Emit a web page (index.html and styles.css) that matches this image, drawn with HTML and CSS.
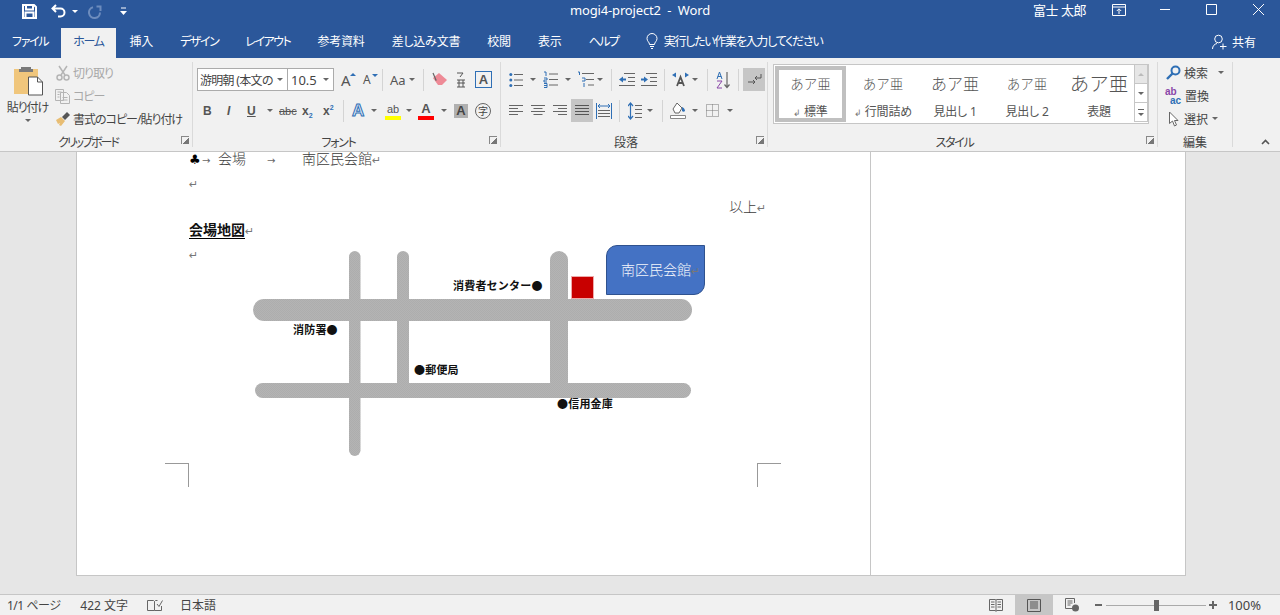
FILE: index.html
```html
<!DOCTYPE html>
<html lang="ja">
<head>
  <meta charset="UTF-8">
  <title>mogi4-project2 - Word</title>
  <link rel="stylesheet" href="styles.css">
</head>
<body>

  <!-- タイトルバー -->
  <header class="titlebar">
    <div class="qat">
      <svg class="ml22" width="15" height="15" viewBox="0 0 15 15"><path d="M1 1h11l2 2v11H1z M4 1.500v4h7v-4 M3.500 14V8.500h8V14" fill="none" stroke="#fff" stroke-width="2"/></svg>
      <svg class="ml14" width="16" height="14" viewBox="0 0 16 14"><path d="M5 1L1.500 4.500 5 8M2 4.500h7.500a4 4 0 0 1 0 8H7" fill="none" stroke="#fff" stroke-width="2"/></svg>
      <span class="caret caret-w ml5"></span>
      <svg class="ml10" width="15" height="15" viewBox="0 0 15 15"><path d="M5 3.200A5.500 5.500 0 1 0 12 8.500" fill="none" stroke="#6d8cbd" stroke-width="2"/><path d="M8.500 2.500H12.500V7" fill="none" stroke="#6d8cbd" stroke-width="2"/></svg>
      <svg class="ml17" width="7" height="8" viewBox="0 0 7 8"><path d="M1 1h5" stroke="#fff"/><path d="M0 4h7L3.500 8z" fill="#fff"/></svg>
    </div>
    <div class="doc-title">mogi4-project2  -  Word</div>
    <div class="win-controls">
      <span class="user">富士 太郎</span>
      <svg class="ml26" width="14" height="12" viewBox="0 0 14 12"><path d="M.5.500h13v11H.5zM.5 3h13M7 10V5M4.800 7L7 4.800 9.200 7" fill="none" stroke="#fff"/></svg>
      <svg class="ml34" width="11" height="11" viewBox="0 0 11 11"><path d="M0 5.500h10" stroke="#fff"/></svg>
      <svg class="ml35" width="11" height="11" viewBox="0 0 11 11"><path d="M.5.500h10v10H.5z" fill="none" stroke="#fff"/></svg>
      <svg class="ml35" width="13" height="13" viewBox="0 0 13 13"><path d="M1 1l11 11M12 1L1 12" stroke="#fff"/></svg>
    </div>
  </header>

  <!-- タブ -->
  <nav class="tabs">
    <span class="tab tab-file kana">ファイル</span>
    <span class="tab active kana">ホーム</span>
    <span class="tab">挿入</span>
    <span class="tab kana">デザイン</span>
    <span class="tab kana">レイアウト</span>
    <span class="tab">参考資料</span>
    <span class="tab">差し込み文書</span>
    <span class="tab">校閲</span>
    <span class="tab">表示</span>
    <span class="tab kana">ヘルプ</span>
    <svg class="bulb" width="12" height="16" viewBox="0 0 12 16"><path d="M3.500 11.500C3.500 9 1 8.500 1 5.500a5 5 0 0 1 10 0c0 3-2.500 3.500-2.500 6zM4 13.500h4M5 15.500h2" fill="none" stroke="#fff"/></svg>
    <span class="tell">実行したい作業を入力してください</span>
    <div class="share">
      <svg width="15" height="16" viewBox="0 0 15 16"><circle cx="6.500" cy="5" r="3.800" fill="none" stroke="#fff"/><path d="M.5 15c0-3 2-5 4.500-5.500M11 9.500v6M8 12.500h6.500" fill="none" stroke="#fff"/></svg>
      <span>共有</span>
    </div>
  </nav>

  <!-- リボン -->
  <section class="ribbon">

    <div class="group g-clip">
      <div class="clip-body">
        <div class="paste">
          <svg width="29" height="30" viewBox="0 0 29 30">
            <path d="M0 3h24v25H0z" fill="#f0c67c"/>
            <path d="M7 3V1h10v2h2v3H5V3z" fill="#7a7a7a"/>
            <path d="M14.500 11h9l5 5v13h-14z" fill="#fff" stroke="#555"/>
            <path d="M23.500 11v5h5" fill="none" stroke="#555"/>
          </svg>
          <span class="paste-label">貼り付け</span>
          <span class="caret"></span>
        </div>
        <div class="clip-list">
          <div class="list-row off">
            <svg width="16" height="16" viewBox="0 0 16 16"><path d="M4 1l6 9M12 1L6 10" stroke="#b4b4b4" stroke-width="1.500" fill="none"/><circle cx="4.500" cy="12.500" r="2.500" fill="none" stroke="#b4b4b4" stroke-width="1.500"/><circle cx="11.500" cy="12.500" r="2.500" fill="none" stroke="#b4b4b4" stroke-width="1.500"/></svg>
            <span>切り取り</span>
          </div>
          <div class="list-row off">
            <svg width="16" height="16" viewBox="0 0 16 16"><path d="M.5 1.500h8v11h-8zM5.500 4.500h6l3 3v8h-9zM2.500 4h4M2.500 6.500h2M2.500 9h2M7.500 9.500h5M7.500 12h5" fill="#f1f1f1" stroke="#b4b4b4"/></svg>
            <span>コピー</span>
          </div>
          <div class="list-row">
            <svg width="16" height="16" viewBox="0 0 16 16"><path d="M1 9l5-3 4 4-4 5-2-1 1-2-2 1z" fill="#e8bd73"/><path d="M7 6l5-5 3 3-5 5z" fill="#555"/></svg>
            <span>書式のコピー/貼り付け</span>
          </div>
        </div>
      </div>
      <div class="group-label kana-wide">クリップボード</div>
      <span class="launcher"></span>
    </div>

    <div class="group g-font">
      <div class="rows">
        <div class="row">
          <span class="combo combo-font"><span>游明朝 (本文の</span><span class="caret"></span></span>
          <span class="combo combo-size"><span>10.5</span><span class="caret"></span></span>
          <span class="glyph glyph-grow ml7">A<i class="up"></i></span>
          <span class="glyph glyph-shrink ml10">A<i class="down"></i></span>
          <span class="sep ml7"></span>
          <span class="glyph glyph-case ml7">Aa</span>
          <span class="caret ml3"></span>
          <span class="sep ml8"></span>
          <svg class="ml8" width="16" height="15" viewBox="0 0 16 15"><path d="M1 6l6-5 8 7-5 5-4 0z" fill="#ee8a96"/><path d="M1 1l3 7h-1" fill="none" stroke="#666" stroke-width="1.200"/></svg>
          <svg class="ml8" width="10" height="16" viewBox="0 0 10 16"><path d="M1 1h6L4 5M1 8h8M1 11h8M1 15h8M3 8v7M7 8v7" fill="none" stroke="#555"/></svg>
          <span class="box-a ml9">A</span>
        </div>
        <div class="row">
          <span class="fmt fmt-b ml6">B</span>
          <span class="fmt fmt-i ml15">I</span>
          <span class="fmt fmt-u ml15">U</span>
          <span class="caret ml10"></span>
          <span class="fmt fmt-s ml6">abc</span>
          <span class="fmt fmt-x ml7">x<sub>2</sub></span>
          <span class="fmt fmt-x ml8">x<sup>2</sup></span>
          <span class="sep ml7"></span>
          <span class="text-effect ml8">A</span>
          <span class="caret ml4"></span>
          <span class="marker ml8"><span class="marker-txt">ab</span><i class="bar bar-y"></i></span>
          <span class="caret ml5"></span>
          <span class="marker ml6"><span class="marker-a">A</span><i class="bar bar-r"></i></span>
          <span class="caret ml7"></span>
          <span class="shade-a ml7">A</span>
          <span class="ji ml7">字</span>
        </div>
      </div>
      <div class="group-label kana">フォント</div>
      <span class="launcher"></span>
    </div>

    <div class="group g-para">
      <div class="rows">
        <div class="row">
          <svg class="ml8" width="14" height="16" viewBox="0 0 14 16"><path d="M5 2.500h9M5 8h9M5 13.500h9" stroke="#666"/><circle cx="1.800" cy="2.500" r="1.500" fill="#2f6fb5"/><circle cx="1.800" cy="8" r="1.500" fill="#2f6fb5"/><circle cx="1.800" cy="13.500" r="1.500" fill="#2f6fb5"/></svg>
          <span class="caret ml7"></span>
          <svg class="ml7" width="15" height="17" viewBox="0 0 15 17"><path d="M6 3h9M6 8.500h9M6 14h9" stroke="#666"/><path d="M1 1h2v4M1 7h3v2H1v2h3M1 12.500h3v4H1M1 14.500h3" fill="none" stroke="#2f6fb5"/></svg>
          <span class="caret ml7"></span>
          <svg class="ml6" width="17" height="17" viewBox="0 0 17 17"><path d="M5 2.500h12M9 8.500h8M11 14h6" stroke="#666"/><path d="M1 1h1.500v3M5 7h3v3H5M7 12v4" fill="none" stroke="#2f6fb5"/></svg>
          <span class="caret ml3"></span>
          <span class="sep ml8"></span>
          <svg class="ml7" width="16" height="14" viewBox="0 0 16 14"><path d="M5 .5h11M9 4.500h7M9 8.500h7M0 12.500h16" stroke="#666"/><path d="M0 6.500l4-3v2h3v2H4v2z" fill="#2f6fb5"/></svg>
          <svg class="ml6" width="16" height="14" viewBox="0 0 16 14"><path d="M5 .5h11M9 4.500h7M9 8.500h7M0 12.500h16" stroke="#666"/><path d="M7 6.500l-4-3v2H0v2h3v2z" fill="#2f6fb5"/></svg>
          <span class="sep ml7"></span>
          <svg class="ml7" width="17" height="15" viewBox="0 0 17 15"><path d="M5 14L8.500 5 12 14M6 11h5" fill="none" stroke="#555" stroke-width="1.800"/><path d="M0 3l4-2.500v5zM17 3l-4-2.500v5z" fill="#2f6fb5"/></svg>
          <span class="caret ml3"></span>
          <span class="sep ml9"></span>
          <svg class="ml8" width="14" height="18" viewBox="0 0 14 18"><path d="M1 8l2.500-7L6 8M1.800 5.500h3.500" fill="none" stroke="#2f6fb5"/><path d="M1 10h5l-5 7h5" fill="none" stroke="#8a46a8"/><path d="M11 1v15M8.500 13.500L11 16.500l2.500-3" fill="none" stroke="#666" stroke-width="1.200"/></svg>
          <span class="sep ml8"></span>
          <span class="on-btn ml4">
            <svg width="15" height="14" viewBox="0 0 15 14"><path d="M14 1v4H8M10 3L8 5l2 2" fill="none" stroke="#555"/><path d="M1 9h7M6 7l2 2-2 2" fill="none" stroke="#555"/></svg>
          </span>
        </div>
        <div class="row">
          <svg class="ml8" width="14" height="11" viewBox="0 0 14 11"><path d="M0 .5h14M0 3.500h9M0 6.500h14M0 9.500h9" stroke="#666"/></svg>
          <svg class="ml8" width="14" height="11" viewBox="0 0 14 11"><path d="M0 .5h14M2.500 3.500h9M0 6.500h14M2.500 9.500h9" stroke="#666"/></svg>
          <svg class="ml8" width="14" height="11" viewBox="0 0 14 11"><path d="M0 .5h14M5 3.500h9M0 6.500h14M5 9.500h9" stroke="#666"/></svg>
          <span class="on-btn ml4">
            <svg width="14" height="11" viewBox="0 0 14 11"><path d="M0 .5h14M0 3.500h14M0 6.500h14M0 9.500h14" stroke="#555"/></svg>
          </span>
          <svg class="ml3" width="16" height="16" viewBox="0 0 16 16"><path d="M.5 0v16M15.500 0v16M2 3h12M2 3l2-2M2 3l2 2M14 3l-2-2M14 3l-2 2" fill="none" stroke="#2f6fb5"/><path d="M2 7.500h12M2 10.500h12M2 13.500h12" stroke="#666"/></svg>
          <span class="sep ml7"></span>
          <svg class="ml8" width="14" height="18" viewBox="0 0 14 18"><path d="M2.500 1v16M0 4l2.500-3L5 4M0 14l2.500 3L5 14" fill="none" stroke="#2f6fb5" stroke-width="1.200"/><path d="M7 3.500h7M7 7.500h7M7 11.500h7M7 15.500h7" stroke="#666"/></svg>
          <span class="caret ml5"></span>
          <span class="sep ml9"></span>
          <svg class="ml7" width="16" height="17" viewBox="0 0 16 17"><path d="M3 7l4-6 5 5-3 5H5z" fill="#fff" stroke="#666"/><path d="M12 5c2 1 3 2.500 3 4-1 1-2 1-3 0z" fill="#2f6fb5"/><path d="M.5 13.500h15v3H.5z" fill="#fff" stroke="#888"/></svg>
          <span class="caret ml6"></span>
          <svg class="ml8" width="13" height="13" viewBox="0 0 13 13"><path d="M.5.500h12v12H.5zM6.500.5v12M.5 6.500h12" fill="none" stroke="#777" stroke-dasharray="1 1"/></svg>
          <span class="caret ml8"></span>
        </div>
      </div>
      <div class="group-label">段落</div>
      <span class="launcher"></span>
    </div>

    <div class="group g-style">
      <div class="gallery">
        <div class="style-item selected"><span class="pv pv-s">あア亜</span><span class="style-name"><i class="enter">↲</i> 標準</span></div>
        <div class="style-item"><span class="pv pv-s">あア亜</span><span class="style-name"><i class="enter">↲</i> 行間詰め</span></div>
        <div class="style-item"><span class="pv pv-m">あア亜</span><span class="style-name">見出し 1</span></div>
        <div class="style-item"><span class="pv pv-s">あア亜</span><span class="style-name">見出し 2</span></div>
        <div class="style-item"><span class="pv pv-l">あア亜</span><span class="style-name">表題</span></div>
        <div class="gallery-scroll">
          <span class="scroll-btn off"><i class="arrow-up"></i></span>
          <span class="scroll-btn"><span class="caret"></span></span>
          <span class="scroll-btn more"><span class="caret"></span></span>
        </div>
      </div>
      <div class="group-label kana">スタイル</div>
      <span class="launcher"></span>
    </div>

    <div class="group g-edit">
      <div class="edit-list">
        <div class="list-row">
          <svg width="15" height="15" viewBox="0 0 15 15"><circle cx="9.500" cy="5.500" r="4" fill="none" stroke="#2f6fb5" stroke-width="2"/><path d="M6.500 8.500L1 14" stroke="#2f6fb5" stroke-width="2.400"/></svg>
          <span>検索</span><span class="caret ml10"></span>
        </div>
        <div class="list-row">
          <span class="replace"><b class="re-ab">ab</b><b class="re-ac">ac</b></span>
          <span>置換</span>
        </div>
        <div class="list-row">
          <svg width="15" height="16" viewBox="0 0 15 16"><path d="M3.500 1v11.500l3-2.500 2 5 2-1-2-4.500h3.500z" fill="#fff" stroke="#666"/></svg>
          <span>選択</span><span class="caret ml4"></span>
        </div>
      </div>
      <div class="group-label">編集</div>
    </div>

    <svg class="collapse" width="9" height="6" viewBox="0 0 9 6"><path d="M1 5l3.500-3.500L8 5" fill="none" stroke="#555" stroke-width="1.600"/></svg>
  </section>

  <!-- 文書 -->
  <main class="workspace">
    <div class="page">
      <div class="sheet">
        <p class="line line-first"><span class="club">♣</span><span class="tabmark tm1">→</span><span class="tm2">会場</span><span class="tabmark tm3">→</span><span class="tm4">南区民会館</span><i class="pil">↵</i></p>
        <p class="line"><i class="pil">↵</i></p>
        <p class="line line-right">以上<i class="pil">↵</i></p>
        <p class="line"><span class="map-title">会場地図</span><i class="pil">↵</i></p>
        <p class="line"><i class="pil">↵</i></p>

        <!-- 地図: 図形はページ上の自由配置 -->
        <div class="map">
          <svg class="roads" width="460" height="215" viewBox="0 0 460 215">
            <defs>
              <pattern id="halftone" width="2" height="2" patternUnits="userSpaceOnUse">
                <rect width="2" height="2" fill="#b4b4b4"/>
                <rect width="1" height="1" fill="#adadad"/>
                <rect x="1" y="1" width="1" height="1" fill="#adadad"/>
              </pattern>
            </defs>
            <g fill="url(#halftone)">
              <rect x="96" y="6" width="11.500" height="205" rx="5.750"/>
              <rect x="144" y="6" width="12" height="140" rx="6"/>
              <rect x="297" y="6" width="18" height="140" rx="9"/>
              <rect x="0" y="54" width="439" height="22" rx="11"/>
              <rect x="2" y="138" width="436" height="15" rx="7.500"/>
            </g>
          </svg>
          <div class="pin red-square"></div>
          <div class="pin hall">南区民会館<i class="pil">↵</i></div>
          <span class="pin place p-center">消費者センター●</span>
          <span class="pin place p-fire">消防署●</span>
          <span class="pin place p-post">●郵便局</span>
          <span class="pin place p-bank">●信用金庫</span>
        </div>

        <span class="crop crop-l"></span>
        <span class="crop crop-r"></span>
      </div>
    </div>
  </main>

  <!-- ステータスバー -->
  <footer class="statusbar">
    <span class="st-page">1/1 ページ</span>
    <span class="st-words">422 文字</span>
    <svg class="st-proof" width="16" height="13" viewBox="0 0 16 13"><path d="M.5 1.500h6l1 1v9h-7zM7.500 2.500l1-1h2M7.500 11.500h7V7M10 5l2 2.500 3.500-6" fill="none" stroke="#666"/></svg>
    <span class="st-lang">日本語</span>
    <div class="st-right">
      <svg width="14" height="15" viewBox="0 0 14 15"><path d="M.5 1.500h6l.5 1 .5-1h6v11h-6l-.5 1-.5-1h-6zM7 2.500v10M2 4h3.500M2 6.500h3.500M2 9h3.500M8.500 4H12M8.500 6.500H12M8.500 9H12" fill="none" stroke="#666"/></svg>
      <span class="view-on"><svg width="14" height="13" viewBox="0 0 14 13"><path d="M.5.500h13v12H.5zM3 3h8M3 5h8M3 7h8M3 9h8" fill="none" stroke="#555"/></svg></span>
      <svg width="14" height="14" viewBox="0 0 14 14"><path d="M8 10.500H.5V.5h9V5M2.500 3h5M2.500 5h5M2.500 7h3" fill="none" stroke="#666"/><circle cx="10.500" cy="10" r="3.500" fill="#666"/></svg>
      <span class="zoom-minus"></span>
      <span class="slider"><i class="thumb"></i></span>
      <span class="zoom-plus"></span>
      <span class="zoom-val">100%</span>
    </div>
  </footer>

</body>
</html>
```

FILE: styles.css
```css
* { box-sizing: border-box; }
html, body { margin: 0; height: 100%; }
body {
  width: 1280px; height: 615px; overflow: hidden; display: flex; flex-direction: column;
  font-family: "Noto Sans", "Noto Sans CJK JP", sans-serif; font-size: 12px; color: #444;
  font-feature-settings: "palt"; background: #e6e6e6;
}
i { font-style: normal; }
svg { display: block; flex: none; }

/* 余白 */
.ml3 { margin-left: 3px; } .ml4 { margin-left: 4px; } .ml5 { margin-left: 5px; }
.ml6 { margin-left: 6px; } .ml7 { margin-left: 7px; } .ml8 { margin-left: 8px; }
.ml9 { margin-left: 9px; } .ml10 { margin-left: 10px; } .ml14 { margin-left: 14px; }
.ml15 { margin-left: 15px; } .ml17 { margin-left: 17px; } .ml22 { margin-left: 22px; }
.ml26 { margin-left: 26px; } .ml34 { margin-left: 34px; } .ml35 { margin-left: 35px; }

.caret {
  display: inline-block; flex: none; width: 0; height: 0;
  border-left: 3px solid transparent; border-right: 3px solid transparent; border-top: 3px solid #666;
}
.caret-w { border-top-color: #fff; }
.kana { letter-spacing: -1.300px; }
.kana-wide { letter-spacing: -2px; }

/* タイトルバー */
.titlebar {
  height: 28px; flex: none; background: #2b579a; color: #fff;
  display: grid; grid-template-columns: 1fr auto 1fr; align-items: center;
}
.qat { display: flex; align-items: center; padding-bottom: 6px; }
.doc-title { font-size: 13px; white-space: pre; letter-spacing: -.15px; padding-bottom: 8px; }
.win-controls { display: flex; align-items: center; justify-content: flex-end; padding: 0 15px 9px 0; }
.user { font-size: 13px; letter-spacing: -.5px; }

/* タブ */
.tabs { height: 30px; flex: none; background: #2b579a; color: #fff; display: flex; align-items: stretch; }
.tab { padding: 0 13.500px; line-height: 28px; white-space: nowrap; letter-spacing: -.2px; }
.tab.kana { letter-spacing: -1.450px; }
.tab.tab-file { padding: 0; width: 61px; text-indent: 12px; letter-spacing: -1.300px; }
.tab.active { background: #f1f1f1; color: #2b579a; padding: 0; width: 55px; text-align: center; letter-spacing: -1.300px; }
.bulb { margin: 5px 0 0 13.500px; }
.tell { margin-left: 6px; line-height: 28px; letter-spacing: -1.250px; }
.share { margin-left: auto; padding: 0 24px 2px 0; display: flex; align-items: center; gap: 5px; }

/* リボン */
.ribbon {
  height: 94px; flex: none; background: #f1f1f1; border-bottom: 1px solid #c6c6c6;
  display: flex; align-items: flex-start; position: relative;
}
.group {
  height: 85px; margin-top: 4px; border-right: 1px solid #dadada;
  display: flex; flex-direction: column; position: relative; flex: none;
}
.g-clip { width: 193px; }
.g-font { width: 308px; }
.g-para { width: 267px; }
.g-style { width: 390px; }
.g-edit { width: 75px; }
.group-label { margin-top: auto; text-align: center; line-height: 16px; margin-bottom: -4px; padding-right: 16px; color: #444; }
.g-edit .group-label { padding-right: 0; }
.launcher {
  position: absolute; right: 3px; bottom: 3px; width: 8px; height: 8px;
  border-left: 1px solid #888; border-top: 1px solid #888;
  background: linear-gradient(135deg, transparent 55%, #777 55%);
}

.clip-body { display: flex; }
.paste { width: 55px; padding-top: 4px; display: flex; flex-direction: column; align-items: center; letter-spacing: -1px; }
.paste svg { margin-left: 2px; }
.paste-label { margin-top: 4px; line-height: 16px; }
.paste .caret { margin-top: 3px; }
.list-row { height: 23px; display: flex; align-items: center; gap: 3px; white-space: nowrap; }
.list-row.off { color: #a8a8a8; }
.clip-list { margin-top: -1px; letter-spacing: -1px; }
.clip-list .list-row { gap: 2px; }

.rows { padding-top: 6px; display: flex; flex-direction: column; gap: 8px; }
.row { height: 23px; display: flex; align-items: center; white-space: nowrap; }
.g-font .row { padding-left: 4px; }

.sep { width: 1px; height: 22px; background: #d4d4d4; flex: none; }
.combo {
  height: 23px; background: #fff; border: 1px solid #ababab; display: flex; align-items: center;
  justify-content: space-between; padding: 0 4px 0 2px; flex: none;
}
.combo-font { width: 91px; letter-spacing: -.7px; }
.combo-size { width: 47px; margin-left: -1px; font-size: 13px; padding-left: 3px; }

.glyph { position: relative; flex: none; font-family: "Noto Sans", sans-serif; color: #555; }
.glyph-grow { font-size: 15px; width: 12px; }
.glyph-shrink { font-size: 12px; width: 12px; }
.glyph-case { font-size: 13px; width: 16px; }
.up, .down {
  position: absolute; right: -3px; top: 3px; width: 0; height: 0;
  border-left: 3px solid transparent; border-right: 3px solid transparent;
}
.up { border-bottom: 3px solid #2f6fb5; }
.down { border-top: 3px solid #2f6fb5; }
.box-a {
  width: 17px; height: 17px; border: 1px solid #2f6fb5; color: #555; text-align: center;
  font: bold 13px/15px "Liberation Sans", sans-serif; flex: none;
}

.fmt { font-family: "Liberation Sans", sans-serif; color: #555; font-size: 12px; flex: none; }
.fmt-b { font-weight: bold; width: 9px; }
.fmt-i { font-style: italic; font-weight: bold; width: 5px; }
.fmt-u { font-weight: bold; text-decoration: underline; width: 10px; }
.fmt-s { font-size: 11px; text-decoration: line-through; width: 16px; }
.fmt-x { font-weight: bold; width: 13px; font-size: 12px; }
.fmt-x sub, .fmt-x sup { font-size: 7px; color: #2f6fb5; line-height: 0; }

.text-effect {
  width: 15px; font: bold 17px/18px "Liberation Sans", sans-serif; color: #dfeaf7; flex: none;
  -webkit-text-stroke: 1px #2f6fb5;
}
.marker { width: 16px; height: 18px; display: flex; flex-direction: column; align-items: center; flex: none; }
.marker-txt { font: 11px/14px "Liberation Sans", sans-serif; color: #555; }
.marker-a { font: bold 13px/14px "Liberation Sans", sans-serif; color: #555; }
.bar { width: 16px; height: 4px; }
.bar-y { background: #ffff00; }
.bar-r { background: #ff0000; }
.shade-a {
  width: 14px; height: 14px; background: #b0b0b0; color: #444; text-align: center; flex: none;
  font: bold 13px/14px "Liberation Sans", sans-serif;
}
.ji {
  width: 16px; height: 16px; border: 1px solid #666; border-radius: 50%; font-size: 10px;
  line-height: 14px; text-align: center; flex: none;
}

.on-btn { width: 22px; height: 23px; background: #c6c6c6; display: flex; align-items: center; justify-content: center; flex: none; }

/* スタイル */
.gallery {
  width: 376px; height: 60px; margin: 2px 0 0 5px; background: #fff; border: 1px solid #c6c6c6;
  display: flex; position: relative;
}
.style-item {
  width: 72px; flex: none; display: flex; flex-direction: column; align-items: center;
  padding-top: 6px; color: #555;
}
.style-item.selected { width: 71px; margin: 1px 1px 0 1px; height: 56px; border: 4px solid #c0c0c0; padding-top: 1px; }
.pv { height: 26px; line-height: 26px; font-weight: 300; white-space: nowrap; font-feature-settings: normal; }
.pv-s { font-size: 13.500px; }
.pv-m { font-size: 16px; }
.pv-l { font-size: 19.500px; }
.style-name { line-height: 18px; margin-top: 6px; white-space: nowrap; letter-spacing: -.2px; }
.selected .style-name { margin-top: 6px; }
.enter { font-size: 9px; color: #777; }
.gallery-scroll { position: absolute; right: 0; top: -1px; width: 14px; height: 60px; display: flex; flex-direction: column; }
.scroll-btn {
  height: 20px; border: 1px solid #c6c6c6; background: #fff; display: flex; align-items: center;
  justify-content: center; margin-bottom: -1px; position: relative;
}
.scroll-btn.off { background: #e6e6e6; }
.arrow-up { width: 0; height: 0; border-left: 3px solid transparent; border-right: 3px solid transparent; border-bottom: 3px solid #bbb; }
.more::before { content: ""; position: absolute; top: 6px; left: 3px; width: 6px; height: 1px; background: #666; }
.more .caret { margin-top: 4px; }

/* 編集 */
.edit-list { padding-left: 8px; margin-top: -1px; }
.edit-list .list-row { gap: 3px; }
.edit-list .ml10 { margin-left: 7px; }
.edit-list .ml4 { margin-left: 1px; }
.replace { width: 16px; margin-left: -1px; margin-right: 1px; height: 18px; position: relative; font: bold 10px/9px "Liberation Sans", sans-serif; flex: none; display: flex; flex-direction: column; align-items: flex-end; }
.re-ab { color: #8a46a8; align-self: flex-start; }
.re-ac { color: #2f6fb5; }
.collapse { position: absolute; right: 10px; bottom: 6px; }

/* 文書エリア */
.workspace { flex: 1; min-height: 0; padding-left: 76px; background: #e6e6e6; }
.page {
  width: 1110px; height: 424px; background: #fff; border: 1px solid #c6c6c6; border-top: none;
}
.sheet { display: flow-root; width: 794px; height: 423px; border-right: 1px solid #c6c6c6; position: relative; padding: 0 105px 0 112px; }
.line {
  margin: 0; height: 23.750px; line-height: 24px; font-size: 14px; color: #3c3c3c; font-weight: 300;
  font-feature-settings: normal; white-space: nowrap;
}
.line-first { margin-top: -5px; }
.line-right { text-align: right; }
.pil { font: 11px/1 "DejaVu Sans", sans-serif; color: #777; display: inline-block; width: 8px; }
.club { font: 13px/1 "DejaVu Sans", sans-serif; color: #000; display: inline-block; width: 13px; }
.tabmark { font: 10px/1 "DejaVu Sans", sans-serif; color: #666; display: inline-block; width: 10px; }
.tm2 { margin-left: 6px; }
.tm3 { margin-left: 21px; }
.tm4 { margin-left: 25px; }
.map-title { font-weight: 700; color: #111; border-bottom: 1px solid #000; display: inline-block; line-height: 17px; }

.map { position: absolute; left: 176px; top: 93px; width: 460px; height: 215px; }
.roads { position: absolute; left: 0; top: 0; }
.pin { position: absolute; }
.red-square { left: 318px; top: 31px; width: 23px; height: 23px; background: #c80000; border: 1px solid #eaa; }
.hall {
  left: 353px; top: 0; width: 99px; height: 50px; background: #4472c4; border: 1px solid #2f528f;
  border-radius: 11px 0 11px 0; color: #f4f6fb; font-size: 14px; line-height: 48px; padding-left: 14px;
  font-weight: 300; font-feature-settings: normal; white-space: nowrap;
}
.place { font-size: 11px; font-weight: 700; color: #111; line-height: 14px; white-space: nowrap; font-feature-settings: normal; letter-spacing: .2px; }
.p-center { left: 200px; top: 34px; }
.p-fire { left: 40px; top: 78px; }
.p-post { left: 161px; top: 118px; }
.p-bank { left: 304px; top: 152px; }

.crop { position: absolute; width: 24px; height: 24px; top: 311px; border-top: 1px solid #999; }
.crop-l { left: 88px; border-right: 1px solid #999; }
.crop-r { left: 680px; border-left: 1px solid #999; }

/* ステータスバー */
.statusbar {
  height: 21px; flex: none; background: #f1f1f1; border-top: 1px solid #c6c6c6;
  display: flex; align-items: center; position: relative; color: #444; white-space: nowrap;
}
.st-page { margin-left: 7px; letter-spacing: -.5px; }
.st-words { margin-left: 20px; }
.st-proof { margin-left: 19px; }
.st-lang { margin-left: 17px; }
.st-right { margin-left: auto; display: flex; align-items: center; height: 100%; padding-right: 19px; }
.view-on { width: 38px; height: 100%; background: #c6c6c6; margin: 0 12px; display: flex; align-items: center; justify-content: center; }
.zoom-minus { width: 7px; height: 2px; background: #666; margin-left: 16px; }
.slider { width: 100px; height: 1px; background: #aaa; margin-left: 4px; position: relative; }
.thumb { position: absolute; left: 48px; top: -5px; width: 5px; height: 11px; background: #666; }
.zoom-plus {
  width: 8px; height: 8px; margin-left: 3px;
  background: linear-gradient(#666, #666) center / 8px 2px no-repeat, linear-gradient(#666, #666) center / 2px 8px no-repeat;
}
.zoom-val { margin-left: 11px; font-size: 13px; }
```
